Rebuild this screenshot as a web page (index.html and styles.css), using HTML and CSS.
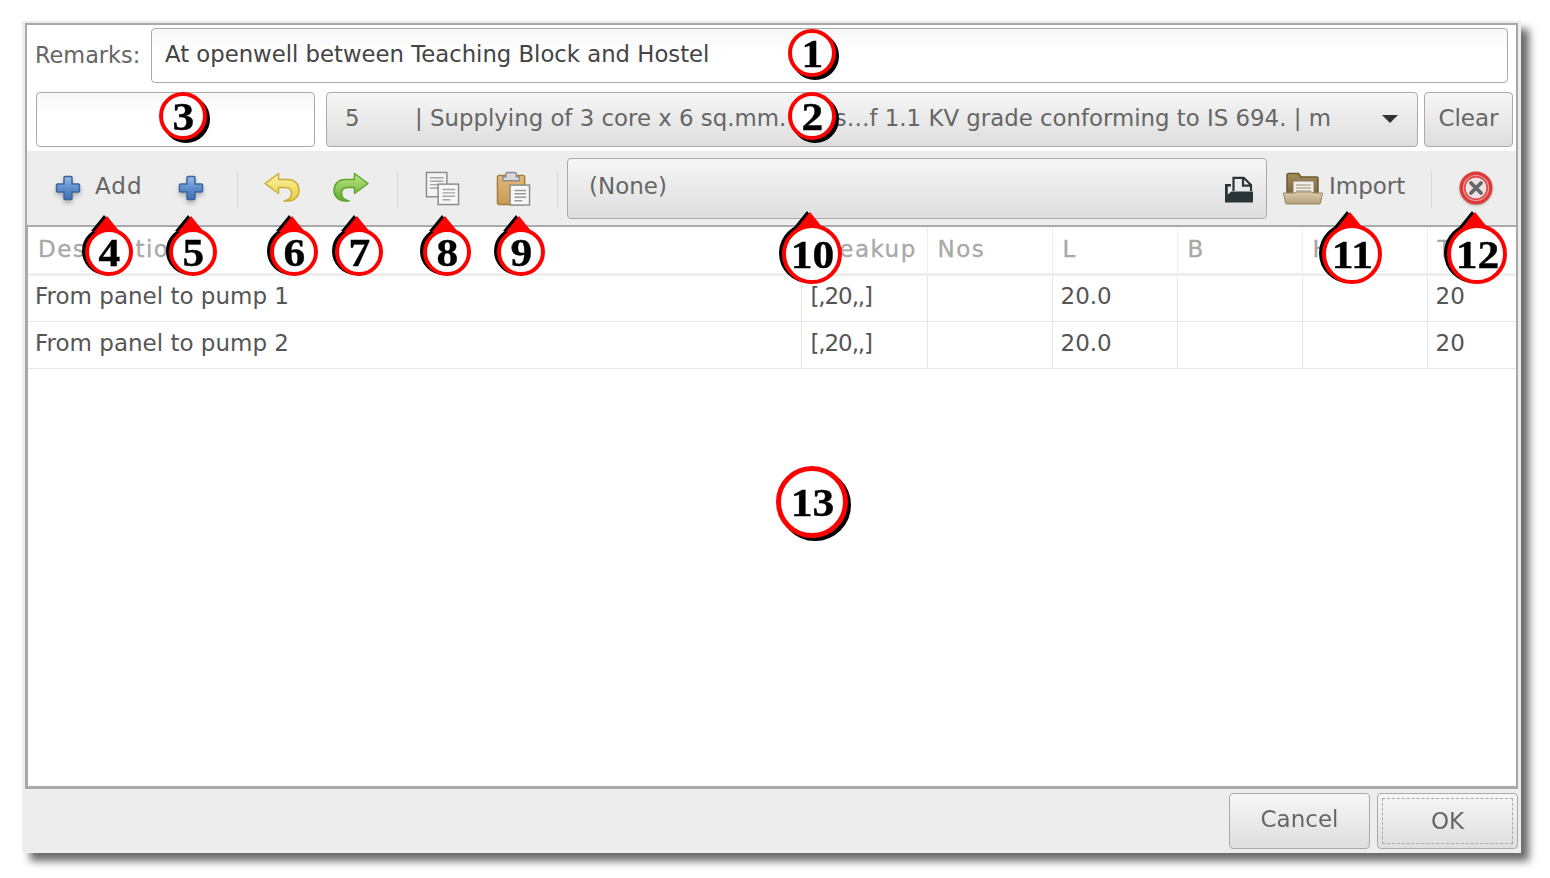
FILE: index.html
```html
<!DOCTYPE html>
<html lang="en">
<head>
<meta charset="utf-8">
<title>Item editor</title>
<link rel="stylesheet" href="styles.css">
</head>
<body>
<svg class="defs" width="0" height="0" aria-hidden="true">
  <defs>
    <linearGradient id="gBlue" x1="0" y1="0" x2="0" y2="1"><stop offset="0" stop-color="#9dbde6"/><stop offset=".5" stop-color="#5f8fcb"/><stop offset="1" stop-color="#3f6fae"/></linearGradient>
    <linearGradient id="gYellow" x1="0" y1="0" x2="0" y2="1"><stop offset="0" stop-color="#fdf3a5"/><stop offset="1" stop-color="#eacb3f"/></linearGradient>
    <linearGradient id="gGreen" x1="0" y1="0" x2="0" y2="1"><stop offset="0" stop-color="#bfe88a"/><stop offset="1" stop-color="#62ab2c"/></linearGradient>
    <linearGradient id="gClip" x1="0" y1="0" x2="0" y2="1"><stop offset="0" stop-color="#e3b878"/><stop offset="1" stop-color="#c99a55"/></linearGradient>
    <linearGradient id="gFolder" x1="0" y1="0" x2="0" y2="1"><stop offset="0" stop-color="#dccdae"/><stop offset="1" stop-color="#b5a07a"/></linearGradient>
    <linearGradient id="gFolderBack" x1="0" y1="0" x2="0" y2="1"><stop offset="0" stop-color="#a58d5c"/><stop offset="1" stop-color="#6f5a36"/></linearGradient>
    <symbol id="plus" viewBox="0 0 26 26">
      <path d="M10 1.500h6a1 1 0 0 1 1 1V9h6.500a1 1 0 0 1 1 1v6a1 1 0 0 1-1 1H17v6.500a1 1 0 0 1-1 1h-6a1 1 0 0 1-1-1V17H2.500a1 1 0 0 1-1-1v-6a1 1 0 0 1 1-1H9V2.500a1 1 0 0 1 1-1z" fill="url(#gBlue)" stroke="#3a659e" stroke-width="1.500"/>
    </symbol>
    <symbol id="arrow" viewBox="0 0 36 30">
      <path d="M1 11.500 14.500 1.500v6H24c7 0 11 5 11 11 0 6-5 10.500-11 10.500h-4c5-1 7.500-4 7.500-8 0-3.500-2.500-5.500-6.500-5.500h-6.500v6z" stroke-width="1.500" stroke-linejoin="round"/>
    </symbol>
  </defs>
</svg>

<div class="window">
  <div class="frame">
    <div class="row row-remarks">
      <label class="remarks-label">Remarks:</label>
      <div class="field remarks-field">At openwell between Teaching Block and Hostel</div>
    </div>
    <div class="row row-item">
      <div class="field code-field"></div>
      <div class="raised combo">
        <span class="combo-num">5</span>
        <span class="combo-text">| Supplying of 3 core x 6 sq.mm. Lugs…f 1.1 KV grade conforming to IS 694. | m</span>
        <span class="caret"></span>
      </div>
      <div class="raised clear-btn">Clear</div>
    </div>

    <div class="toolbar">
      <div class="tool tool-add">
        <svg class="icon-plus"><use href="#plus"/></svg>
        <span class="add-label">Add</span>
      </div>
      <div class="tool tool-plus"><svg class="icon-plus"><use href="#plus"/></svg></div>
      <i class="sep sep-a"></i>
      <div class="tool tool-undo"><svg class="icon-arrow undo"><use href="#arrow"/></svg></div>
      <div class="tool tool-redo"><svg class="icon-arrow redo"><use href="#arrow"/></svg></div>
      <i class="sep sep-b"></i>
      <div class="tool tool-copy">
        <svg class="icon-doc" viewBox="0 0 36 36">
          <rect x="1.500" y="1.500" width="21" height="25" fill="#f4f4f4" stroke="#8c8c8c" stroke-width="1.500"/>
          <path d="M5 7h14M5 10.500h14M5 14h14M5 17.500h10" stroke="#a5a5a5" stroke-width="1.500"/>
          <rect x="13.500" y="13.500" width="21" height="21" fill="#f7f7f7" stroke="#8c8c8c" stroke-width="1.500"/>
          <path d="M18 19h13M18 22.500h13M18 26h13M18 29.500h8" stroke="#a5a5a5" stroke-width="1.500"/>
        </svg>
      </div>
      <div class="tool tool-paste">
        <svg class="icon-doc" viewBox="0 0 36 36">
          <rect x="1.500" y="4.500" width="28" height="30" rx="2" fill="url(#gClip)" stroke="#a67c3c" stroke-width="1.500"/>
          <path d="M10 6V3.500a2 2 0 0 1 2-2h7a2 2 0 0 1 2 2V6h3v4H7V6z" fill="#d8d8d8" stroke="#8c8c8c" stroke-width="1.500"/>
          <rect x="14.500" y="14.500" width="20" height="20.500" fill="#f7f7f7" stroke="#8c8c8c" stroke-width="1.500"/>
          <path d="M19 20h12M19 23.500h12M19 27h12M19 30.500h8" stroke="#9a9a9a" stroke-width="1.500"/>
        </svg>
      </div>
      <i class="sep sep-c"></i>
      <div class="raised file-field">
        <span class="file-none">(None)</span>
        <svg class="icon-open" viewBox="0 0 28 27">
          <path d="M8.500 15V1.800h10.200L26 9v6M18 2.500V9.700h7.500" fill="none" stroke="#2b3537" stroke-width="2.200"/>
          <path d="M0 8h6v2.500H2.800v8L6.500 15.500H28V26.500H0z" fill="#2b3537"/>
        </svg>
      </div>
      <div class="tool tool-import">
        <svg class="icon-folder" viewBox="0 0 40 33">
          <path d="M4 28V3a1.500 1.500 0 0 1 1.500-1.500h10L18 5h15.500A1.500 1.500 0 0 1 35 6.500V28z" fill="url(#gFolderBack)" stroke="#6d5833" stroke-width="1.500"/>
          <rect x="10" y="9" width="21" height="17" fill="#f1efe6" stroke="#837a66"/>
          <path d="M13 13h15M13 16h15M13 19h15" stroke="#b5b0a0" stroke-width="1.500"/>
          <path d="M8 21h4l1-1h16l1 1h9.500l-2 10a1.500 1.500 0 0 1-1.500 1H4a1.500 1.500 0 0 1-1.500-1L.5 21z" fill="url(#gFolder)" stroke="#9a8660"/>
        </svg>
        <span>Import</span>
      </div>
      <i class="sep sep-d"></i>
      <div class="tool tool-close">
        <svg class="icon-close" viewBox="0 0 34 34">
          <circle cx="17" cy="17" r="13.500" fill="#ece4e4" stroke="#dc3c3c" stroke-width="6"/>
          <circle cx="17" cy="17" r="12.500" fill="none" stroke="#f0a0a0" stroke-width="1.200"/>
          <path d="m12 12 10 10m0-10L12 22" stroke="#666" stroke-width="3.800" stroke-linecap="round"/>
        </svg>
      </div>
    </div>

    <div class="table-wrap">
      <table class="grid">
        <thead>
          <tr><th>Description</th><th>Breakup</th><th>Nos</th><th>L</th><th>B</th><th>H</th><th>T</th></tr>
        </thead>
        <tbody>
          <tr><td>From panel to pump 1</td><td class="breakup">[,20,,]</td><td></td><td>20.0</td><td></td><td></td><td>20</td></tr>
          <tr><td>From panel to pump 2</td><td class="breakup">[,20,,]</td><td></td><td>20.0</td><td></td><td></td><td>20</td></tr>
        </tbody>
      </table>
    </div>
  </div>

  <div class="footer">
    <div class="raised foot-btn">Cancel</div>
    <div class="raised foot-btn ok-btn"><span class="ok-inner">OK</span></div>
  </div>
</div>

<div class="pin plain n1"><span class="shape"></span><b>1</b></div>
<div class="pin plain n2"><span class="shape"></span><b>2</b></div>
<div class="pin plain n3"><span class="shape"></span><b>3</b></div>
<div class="pin up n4"><span class="shape"></span><b>4</b></div>
<div class="pin up n5"><span class="shape"></span><b>5</b></div>
<div class="pin up n6"><span class="shape"></span><b>6</b></div>
<div class="pin up n7"><span class="shape"></span><b>7</b></div>
<div class="pin up n8"><span class="shape"></span><b>8</b></div>
<div class="pin up n9"><span class="shape"></span><b>9</b></div>
<div class="pin up wide n10"><span class="shape"></span><b>10</b></div>
<div class="pin up wide n11"><span class="shape"></span><b>11</b></div>
<div class="pin up wide n12"><span class="shape"></span><b>12</b></div>
<div class="pin plain big n13"><span class="shape"></span><b>13</b></div>
</body>
</html>
```

FILE: styles.css
```css
* { box-sizing: border-box; }
html, body { margin: 0; height: 100%; background: #fff; overflow: hidden; }
body { position: relative; font-family: "DejaVu Sans", sans-serif; font-size: 23px; color: #555; }
.defs { position: absolute; }

.window {
  margin: 21px 0 0 22px;
  width: 1499px;
  height: 832px;
  display: flex;
  flex-direction: column;
  background: #ededed;
  box-shadow: 8px 8px 8px #6a6a6a;
  filter: blur(.45px);
}
.frame {
  flex: none;
  height: 766px;
  margin: 2px 3px 0;
  display: flex;
  flex-direction: column;
  background: #fff;
  border: 2px solid #a8a8a8;
  border-bottom-width: 3px;
}
.row { display: flex; background: #fff; flex: none; }
.row-remarks { height: 66px; align-items: center; padding: 0 8px 5px; gap: 10px; }
.remarks-label { width: 106px; color: #666; font-size: 22.4px; margin-top: -2px; }
.field {
  border: 1.500px solid #aaa;
  border-radius: 4px;
  background: linear-gradient(#f7f7f7, #fff 45%);
  color: #444;
}
.remarks-field { flex: 1; height: 55px; line-height: 51px; padding-left: 13px; font-size: 22.75px; }
.row-item { height: 60px; padding: 1px 3px 0 9px; }
.code-field { width: 279px; height: 55px; margin-right: 11px; }
.raised {
  border: 1.500px solid #aaa;
  border-radius: 4px;
  background: linear-gradient(#f6f6f6, #dedede);
  color: #666;
}
.combo { width: 1092px; height: 55px; display: flex; align-items: center; padding: 0 19px 3px 18px; margin-right: 6px; font-size: 22.85px; }
.combo-num { width: 70px; flex: none; }
.combo-text { flex: 1; white-space: nowrap; overflow: hidden; }
.caret { width: 0; height: 0; flex: none; border: 8px solid transparent; border-top: 8px solid #333; border-bottom: 0; margin-top: 2px; }
.clear-btn { width: 89px; height: 55px; line-height: 51px; text-align: center; }

.toolbar {
  flex: none;
  height: 76px;
  display: flex;
  align-items: center;
  background: #ededed;
  border-bottom: 2px solid #aaa;
  padding-left: 28px;
  color: #666;
}
.tool { display: flex; align-items: center; flex: none; }
.icon-plus { width: 26px; height: 26px; filter: drop-shadow(0 3px 2px rgba(0,0,0,.25)); }
.tool-add { gap: 14px; width: 123px; margin-top: -1px; }
.add-label { letter-spacing: 1px; margin-top: -3px; }
.tool-plus { width: 26px; }
.icon-arrow { width: 36px; height: 30px; margin-top: -2px; }
.undo { fill: url(#gYellow); stroke: #c9ad35; }
.redo { fill: url(#gGreen); stroke: #5fa52a; transform: scaleX(-1); }
.sep { display: block; width: 1px; height: 38px; background: #d8d8d8; flex: none; }
.sep-a { margin: 2px 26px 0 33px; }
.sep-b { margin: 2px 27px 0 28px; }
.sep-c { margin: 2px 9px 0 26px; }
.sep-d { margin: 2px 27px 0 26px; }
.tool-redo { margin-left: 33px; }
.icon-doc { width: 35px; height: 35px; display: block; }
.tool-paste { margin-left: 36px; }
.file-field { width: 700px; height: 61px; display: flex; align-items: center; justify-content: space-between; padding: 0 13px 0 21px; }
.file-none { margin-top: -5px; }
.icon-open { width: 28px; height: 27px; margin-top: 2px; }
.tool-import { margin-left: 16px; gap: 6px; margin-top: -4px; }
.icon-folder { width: 40px; height: 33px; margin-top: 4px; }
.icon-close { width: 34px; height: 34px; display: block; filter: drop-shadow(0 1px 1px rgba(0,0,0,.25)); }

.table-wrap { flex: 1; min-height: 0; background: #fff; border-left: 1px solid #a8a8a8; overflow: hidden; }
.grid { border-collapse: collapse; table-layout: fixed; width: 1488px; }
.grid th:nth-child(1), .grid td:nth-child(1) { width: 773px; }
.grid th:nth-child(2), .grid td:nth-child(2) { width: 126px; }
.grid th:nth-child(n+3), .grid td:nth-child(n+3) { width: 125px; }
.grid th:last-child, .grid td:last-child { width: 89px; }
th {
  height: 47px;
  padding: 0 0 1px 10px;
  border-right: 1px solid #eee;
  border-bottom: 3px solid #eee;
  text-align: left;
  font-weight: normal;
  letter-spacing: 1.500px;
  color: #a8a8a8;
  -webkit-text-stroke: .3px #a8a8a8;
}
td {
  height: 47px;
  padding: 0 0 4px 8px;
  border-right: 1px solid #e6e6e6;
  border-bottom: 1px solid #e6e6e6;
  color: #555;
}
td.breakup { padding-left: 9px; letter-spacing: -1.100px; }
th:first-child { padding-left: 10px; }
td:first-child { padding-left: 7px; }
th:last-child, td:last-child { border-right: 0; }

.footer {
  flex: 1;
  display: flex;
  justify-content: flex-end;
  align-items: flex-start;
  gap: 7px;
  padding: 4px 3px 0 0;
}
.foot-btn { width: 141px; height: 56px; line-height: 50px; text-align: center; }
.ok-btn { padding: 4px; line-height: 44px; }
.ok-inner { display: block; height: 100%; border: 1px dashed #aaa; }

.pin { position: absolute; width: 48px; height: 48px; display: flex; align-items: center; justify-content: center; }
.pin b { position: relative; font: bold 41px/1 "Liberation Serif", serif; color: #000; -webkit-text-stroke: .4px #000; transform: scaleX(1.06); }
.shape { position: absolute; inset: 0; border-radius: 50%; border: 4px solid #f00; background: #fff; }
.plain .shape { filter: drop-shadow(3px 3px 0 #000); }
.up .shape { filter: drop-shadow(-3px -1px 0 #000); }
.up .shape::before {
  content: "";
  position: absolute;
  left: calc(50% - 15px);
  top: -16px;
  width: 26px;
  height: 16px;
  background: #f00;
  clip-path: polygon(50% 0, 100% 100%, 0 100%);
}
.wide { width: 60px; height: 60px; }
.big { width: 72px; height: 72px; }
.big .shape { border-width: 5px; }
.n1 { left: 788px; top: 29px; }
.n2 { left: 788px; top: 92px; }
.n3 { left: 159px; top: 92px; }
.n4 { left: 85px; top: 228px; }
.n5 { left: 169px; top: 228px; }
.n6 { left: 270px; top: 228px; }
.n7 { left: 335px; top: 228px; }
.n8 { left: 423px; top: 228px; }
.n9 { left: 497px; top: 228px; }
.n10 { left: 782px; top: 224px; }
.n11 { left: 1322px; top: 224px; }
.n12 { left: 1447px; top: 224px; }
.n13 { left: 776px; top: 466px; }
```
